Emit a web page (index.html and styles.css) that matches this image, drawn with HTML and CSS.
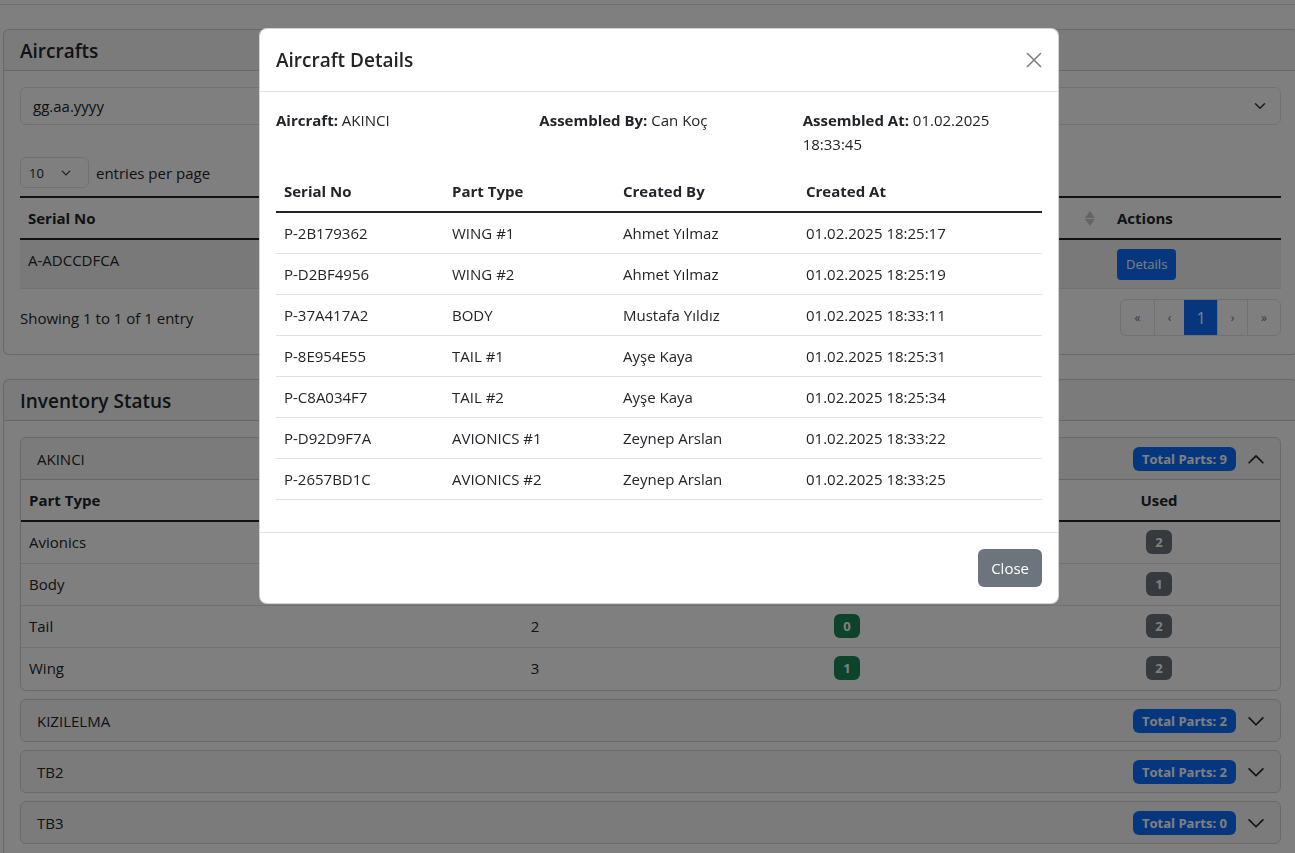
FILE: index.html
```html
<!DOCTYPE html>
<html lang="tr">
<head>
<meta charset="utf-8">
<title>Aircrafts</title>
<link rel="stylesheet" href="styles.css">
</head>
<body>
<div class="topbar"></div>
<main class="page">
  <section class="card">
    <div class="card-header"><h5 class="card-title">Aircrafts</h5></div>
    <div class="card-body">
      <div class="form-select date-select">
        <span>gg.aa.yyyy</span>
        <svg class="sel-chev" width="16" height="12" viewBox="0 0 16 16"><path d="m2 5 6 6 6-6" fill="none" stroke="#343a40" stroke-width="2" stroke-linecap="round" stroke-linejoin="round"/></svg>
      </div>
      <div class="dt-top">
        <div class="form-select per-page">
          <span>10</span>
          <svg width="14" height="10" viewBox="0 0 16 16"><path d="m2 5 6 6 6-6" fill="none" stroke="#343a40" stroke-width="2" stroke-linecap="round" stroke-linejoin="round"/></svg>
        </div>
        <span>entries per page</span>
      </div>
      <table class="dt">
        <colgroup><col class="w-serial"><col class="w-type"><col class="w-by"><col class="w-at"><col class="w-act"></colgroup>
        <thead>
          <tr>
            <th><div class="th-inner"><span>Serial No</span><span class="sorter"></span></div></th>
            <th><div class="th-inner"><span></span><span class="sorter"></span></div></th>
            <th><div class="th-inner"><span></span><span class="sorter"></span></div></th>
            <th><div class="th-inner"><span></span><span class="sorter"></span></div></th>
            <th>Actions</th>
          </tr>
        </thead>
        <tbody>
          <tr>
            <td>A-ADCCDFCA</td>
            <td></td>
            <td></td>
            <td></td>
            <td><button class="btn-details">Details</button></td>
          </tr>
        </tbody>
      </table>
      <div class="dt-bottom">
        <span>Showing 1 to 1 of 1 entry</span>
        <nav class="pager">
          <span class="pg pg-wide pg-small">«</span>
          <span class="pg pg-small">‹</span>
          <span class="pg pg-wide active">1</span>
          <span class="pg pg-small">›</span>
          <span class="pg pg-wide pg-small">»</span>
        </nav>
      </div>
    </div>
  </section>

  <section class="card">
    <div class="card-header"><h5 class="card-title">Inventory Status</h5></div>
    <div class="card-body">
      <div class="acc-item open">
        <div class="acc-head">
          <span class="acc-name">AKINCI</span>
          <span class="badge-total">Total Parts: 9</span>
          <svg class="acc-chev" width="20" height="20" viewBox="0 0 16 16"><path d="M2.5 11 8 5.5 13.5 11" fill="none" stroke="#212529" stroke-width="1.4" stroke-linecap="round" stroke-linejoin="round"/></svg>
        </div>
        <table class="inv">
          <colgroup><col class="i1"><col class="i2"><col class="i3"><col class="i4"></colgroup>
          <thead>
            <tr><th class="left">Part Type</th><th></th><th></th><th>Used</th></tr>
          </thead>
          <tbody>
            <tr><td class="left">Avionics</td><td></td><td></td><td><span class="nb gray">2</span></td></tr>
            <tr><td class="left">Body</td><td></td><td></td><td><span class="nb gray">1</span></td></tr>
            <tr><td class="left">Tail</td><td>2</td><td><span class="nb green">0</span></td><td><span class="nb gray">2</span></td></tr>
            <tr><td class="left">Wing</td><td>3</td><td><span class="nb green">1</span></td><td><span class="nb gray">2</span></td></tr>
          </tbody>
        </table>
      </div>
      <div class="acc-item">
        <div class="acc-head">
          <span class="acc-name">KIZILELMA</span>
          <span class="badge-total">Total Parts: 2</span>
          <svg class="acc-chev" width="20" height="20" viewBox="0 0 16 16"><path d="M2.5 5.5 8 11 13.5 5.5" fill="none" stroke="#212529" stroke-width="1.4" stroke-linecap="round" stroke-linejoin="round"/></svg>
        </div>
      </div>
      <div class="acc-item">
        <div class="acc-head">
          <span class="acc-name">TB2</span>
          <span class="badge-total">Total Parts: 2</span>
          <svg class="acc-chev" width="20" height="20" viewBox="0 0 16 16"><path d="M2.5 5.5 8 11 13.5 5.5" fill="none" stroke="#212529" stroke-width="1.4" stroke-linecap="round" stroke-linejoin="round"/></svg>
        </div>
      </div>
      <div class="acc-item">
        <div class="acc-head">
          <span class="acc-name">TB3</span>
          <span class="badge-total">Total Parts: 0</span>
          <svg class="acc-chev" width="20" height="20" viewBox="0 0 16 16"><path d="M2.5 5.5 8 11 13.5 5.5" fill="none" stroke="#212529" stroke-width="1.4" stroke-linecap="round" stroke-linejoin="round"/></svg>
        </div>
      </div>
    </div>
  </section>
</main>

<div class="backdrop"></div>

<div class="modal" role="dialog">
  <div class="modal-header">
    <h5 class="modal-title">Aircraft Details</h5>
    <button class="btn-close" aria-label="Close">
      <svg width="16" height="16" viewBox="0 0 16 16"><path d="M1.5 1.5 14.5 14.5M14.5 1.5 1.5 14.5" stroke="#000" stroke-width="1.6" stroke-linecap="round"/></svg>
    </button>
  </div>
  <div class="modal-body">
    <div class="info-row">
      <p class="info"><b>Aircraft:</b> AKINCI</p>
      <p class="info"><b>Assembled By:</b> Can Koç</p>
      <p class="info"><b>Assembled At:</b> 01.02.2025 18:33:45</p>
    </div>
    <table class="parts">
      <colgroup><col class="p1"><col class="p2"><col class="p3"><col class="p4"></colgroup>
      <thead>
        <tr><th>Serial No</th><th>Part Type</th><th>Created By</th><th>Created At</th></tr>
      </thead>
      <tbody>
        <tr><td>P-2B179362</td><td>WING #1</td><td>Ahmet Yılmaz</td><td>01.02.2025 18:25:17</td></tr>
        <tr><td>P-D2BF4956</td><td>WING #2</td><td>Ahmet Yılmaz</td><td>01.02.2025 18:25:19</td></tr>
        <tr><td>P-37A417A2</td><td>BODY</td><td>Mustafa Yıldız</td><td>01.02.2025 18:33:11</td></tr>
        <tr><td>P-8E954E55</td><td>TAIL #1</td><td>Ayşe Kaya</td><td>01.02.2025 18:25:31</td></tr>
        <tr><td>P-C8A034F7</td><td>TAIL #2</td><td>Ayşe Kaya</td><td>01.02.2025 18:25:34</td></tr>
        <tr><td>P-D92D9F7A</td><td>AVIONICS #1</td><td>Zeynep Arslan</td><td>01.02.2025 18:33:22</td></tr>
        <tr><td>P-2657BD1C</td><td>AVIONICS #2</td><td>Zeynep Arslan</td><td>01.02.2025 18:33:25</td></tr>
      </tbody>
    </table>
  </div>
  <div class="modal-footer">
    <button class="btn-secondary">Close</button>
  </div>
</div>
</body>
</html>
```

FILE: styles.css
```css
* { box-sizing: border-box; }
html, body { margin: 0; }
body {
  font-family: "Open Sans", "Noto Sans", sans-serif;
  font-size: 15px;
  line-height: 24px;
  color: #212529;
  background: #fff;
  width: 1295px;
  height: 853px;
  overflow: hidden;
}
button { font-family: inherit; }

.topbar { height: 5px; border-bottom: 1px solid #dedede; }
.page { padding: 24px 0 0 3px; }

.card {
  width: 1295px;
  border: 1px solid rgba(0,0,0,.175);
  border-radius: 6px;
  background: #fff;
  margin-bottom: 24px;
}
.card-header {
  padding: 9px 16px 7px;
  background: rgba(0,0,0,.03);
  border-bottom: 1px solid rgba(0,0,0,.175);
  border-radius: 5px 5px 0 0;
}
.card-title { margin: 0; font-size: 19px; font-weight: 600; line-height: 24px; }
.card-body { padding: 16px; }

.form-select {
  display: flex;
  align-items: center;
  justify-content: space-between;
  border: 1px solid #dee2e6;
  border-radius: 6px;
  background: #fff;
}
.date-select { height: 38px; padding: 0 12px; }
.dt-top { display: flex; align-items: center; gap: 7px; margin-top: 32px; height: 31px; }
.per-page { width: 69px; height: 31px; padding: 0 15px 0 8px; font-size: 13px; }

table { border-collapse: collapse; width: 100%; }
.dt { margin-top: 8px; border-top: 2px solid #212529; }
.dt th {
  text-align: left;
  padding: 8px;
  font-weight: 700;
  border-bottom: 2px solid #212529;
}
.th-inner { display: flex; justify-content: space-between; align-items: center; min-height: 24px; }
.sorter { display: flex; flex-direction: column; gap: 1px; margin-right: 6px; }
.sorter::before, .sorter::after {
  content: "";
  width: 0; height: 0;
  border-left: 5px solid transparent;
  border-right: 5px solid transparent;
}
.sorter::before { border-bottom: 7px solid #c9c9c9; }
.sorter::after { border-top: 7px solid #c9c9c9; }
.dt td {
  padding: 9px 8px 8px;
  vertical-align: top;
  background: rgba(0,0,0,.05);
  border-bottom: 1px solid #dee2e6;
}
.dt td:first-child { padding-top: 8px; }
.w-serial { width: 290px; }
.w-type { width: 260px; }
.w-by { width: 260px; }
.w-at { width: 279px; }
.w-act { width: 172px; }
.btn-details {
  display: block;
  border: 0;
  background: #0d6efd;
  color: #fff;
  font-size: 13px;
  line-height: 23px;
  padding: 4px 9px;
  border-radius: 4px;
}
.dt-bottom {
  display: flex;
  justify-content: space-between;
  align-items: center;
  margin-top: 10px;
  padding-bottom: 2px;
}
.pager {
  display: flex;
  border: 1px solid #dee2e6;
  border-radius: 6px;
  overflow: hidden;
  height: 37px;
}
.pg {
  width: 30px;
  display: flex;
  align-items: center;
  justify-content: center;
  color: #6c757d;
  border-left: 1px solid #dee2e6;
}
.pg:first-child { border-left: 0; }
.pg-wide { width: 33px; }
.pg-small { font-size: 12px; }
.pg.active { background: #0d6efd; color: #fff; border-color: #0d6efd; font-size: 16px; }

.acc-item {
  border: 1px solid rgba(0,0,0,.175);
  border-radius: 6px;
  margin-bottom: 8px;
  overflow: hidden;
}
.acc-head {
  display: flex;
  align-items: center;
  padding: 9px 14px 8px 16px;
  background: rgba(0,0,0,.03);
}
.acc-item.open .acc-head { border-bottom: 1px solid rgba(0,0,0,.175); }
.acc-name { font-weight: 500; }
.badge-total {
  margin-left: auto;
  background: #0d6efd;
  color: #fff;
  font-size: 13px;
  font-weight: 700;
  line-height: 24px;
  padding: 0 9px;
  border-radius: 6px;
}
.acc-chev { margin-left: 10px; }

.inv th {
  padding: 8px;
  font-weight: 700;
  text-align: center;
  border-bottom: 2px solid #212529;
}
.inv td {
  padding: 8px;
  line-height: 25px;
  height: 42px;
  text-align: center;
  vertical-align: middle;
  border-bottom: 1px solid #dee2e6;
}
.inv tr:last-child td { border-bottom: 0; }
.inv .left { text-align: left; }
.i1 { width: 393px; }
.i2 { width: 242px; }
.i3 { width: 382px; }
.i4 { width: 242px; }
.nb {
  display: inline-block;
  min-width: 26px;
  height: 24px;
  line-height: 24px;
  padding: 0 9px;
  border-radius: 6px;
  font-size: 13px;
  font-weight: 700;
  color: #fff;
  vertical-align: top;
}
.nb.green { background: #198754; }
.nb.gray { background: #6c757d; }

.backdrop { position: fixed; inset: 0; background: rgba(0,0,0,.5); }

.modal {
  position: fixed;
  top: 28px;
  left: 259px;
  width: 800px;
  background: #fff;
  border: 1px solid rgba(0,0,0,.175);
  border-radius: 8px;
}
.modal-header {
  display: flex;
  align-items: center;
  padding: 16px;
  border-bottom: 1px solid #dee2e6;
}
.modal-title { margin: 0; font-size: 19px; font-weight: 600; line-height: 30px; }
.btn-close {
  margin: -8px -8px -8px auto;
  padding: 8px;
  width: 32px;
  height: 32px;
  border: 0;
  background: transparent;
  opacity: .5;
  display: flex;
}
.modal-body { padding: 16px; }
.info-row {
  display: grid;
  grid-template-columns: repeat(3, 1fr);
  column-gap: 24px;
  margin-bottom: 15px;
}
.info { margin: 0; }
.info b { font-weight: 700; }
.parts th {
  text-align: left;
  padding: 8px;
  font-weight: 700;
  border-bottom: 2px solid #212529;
}
.parts td { padding: 8px; border-bottom: 1px solid #dee2e6; }
.p1 { width: 168px; }
.p2 { width: 171px; }
.p3 { width: 183px; }
.p4 { width: 244px; }
.modal-body .parts { margin-bottom: 16px; }
.modal-footer {
  display: flex;
  justify-content: flex-end;
  padding: 12px;
  border-top: 1px solid #dee2e6;
}
.btn-secondary {
  margin: 4px;
  border: 0;
  background: #6c757d;
  color: #fff;
  font-size: 15px;
  line-height: 24px;
  padding: 7px 13px;
  border-radius: 6px;
}
```
